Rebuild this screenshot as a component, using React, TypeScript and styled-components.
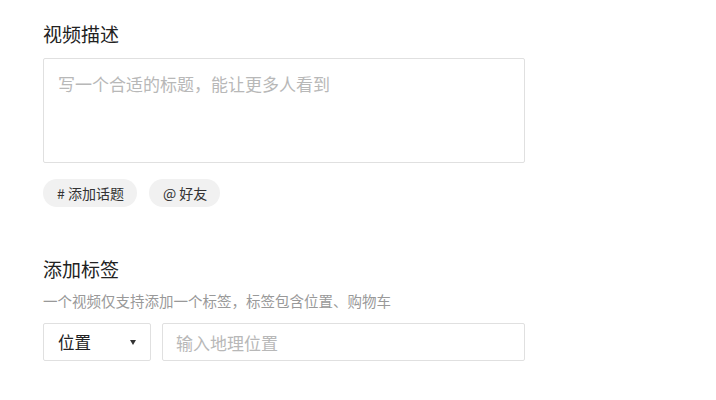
import styled, { createGlobalStyle } from 'styled-components';

const GlobalStyle = createGlobalStyle`
  body {
    margin: 0;
    background: #fff;
    font-family: "Noto Sans CJK SC", "Liberation Sans", sans-serif;
  }
`

const Page = styled.div`
  padding: 20px 0 0 43px;
  width: 482px;
`

const Title = styled.div`
  font-size: 19px;
  line-height: 28px;
  color: #222;
`

const TextBox = styled.div`
  margin-top: 10px;
  height: 105px;
  box-sizing: border-box;
  border: 1px solid #e0e0e0;
  border-radius: 2px;
  padding: 12px 14px;
  font-size: 17px;
  line-height: 26px;
  color: #b8b8b8;
`

const Chips = styled.div`
  display: flex;
  gap: 12px;
  margin-top: 16px;
`

const Chip = styled.div`
  height: 28px;
  line-height: 28px;
  padding: 0 13px 0 14px;
  border-radius: 14px;
  background: #f1f1f1;
  font-size: 14px;
  color: #333;
`

const Section = styled.div`
  margin-top: 48px;
`

const Hint = styled.div`
  margin-top: 8px;
  font-size: 14.5px;
  line-height: 20px;
  color: #999;
`

const Row = styled.div`
  display: flex;
  gap: 11px;
  margin-top: 12px;
`

const Select = styled.div`
  width: 108px;
  height: 38px;
  box-sizing: border-box;
  border: 1px solid #e0e0e0;
  border-radius: 2px;
  display: flex;
  align-items: center;
  justify-content: space-between;
  padding: 0 14px 0 14px;
  font-size: 16.5px;
  color: #222;
`

const Caret = styled.span`
  width: 0;
  height: 0;
  border-left: 3.5px solid transparent;
  border-right: 3.5px solid transparent;
  border-top: 5px solid #333;
`

const Input = styled.div`
  flex: 1;
  height: 38px;
  box-sizing: border-box;
  border: 1px solid #e0e0e0;
  border-radius: 2px;
  display: flex;
  align-items: center;
  padding: 0 13px;
  font-size: 17px;
  color: #b8b8b8;
`

const App = () => (
  <>
    <GlobalStyle />
    <Page>
      <Title>视频描述</Title>
      <TextBox>写一个合适的标题，能让更多人看到</TextBox>
      <Chips>
        <Chip># 添加话题</Chip>
        <Chip>@ 好友</Chip>
      </Chips>
      <Section>
        <Title>添加标签</Title>
        <Hint>一个视频仅支持添加一个标签，标签包含位置、购物车</Hint>
        <Row>
          <Select>位置<Caret /></Select>
          <Input>输入地理位置</Input>
        </Row>
      </Section>
    </Page>
  </>
);

export default App;
